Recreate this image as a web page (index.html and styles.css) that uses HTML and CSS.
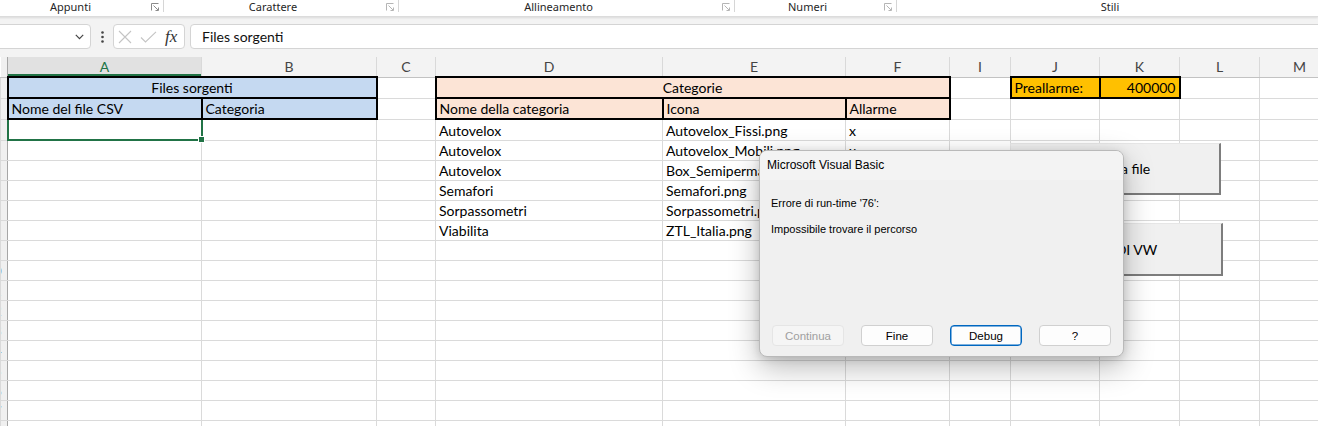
FILE: index.html
```html
<!DOCTYPE html>
<html lang="it">
<head>
<meta charset="utf-8">
<title>Excel - Microsoft Visual Basic</title>
<link rel="stylesheet" href="styles.css">
</head>
<body>
<div class="app">
  <div class="ribbon">
    <div class="grp g1"><span class="lbl">Appunti</span><span class="launch"><svg width="8" height="8" viewBox="0 0 8 8"><path d="M0.5 7.5V0.5H7.5M2.5 2.5L7 7M7.5 4.5V7.5H4.5" fill="none" stroke="#8a8a8a" stroke-width="1"/></svg></span></div><i class="sep"></i>
    <div class="grp g2"><span class="lbl">Carattere</span><span class="launch"><svg width="8" height="8" viewBox="0 0 8 8"><path d="M0.5 7.5V0.5H7.5M2.5 2.5L7 7M7.5 4.5V7.5H4.5" fill="none" stroke="#b5b5b5" stroke-width="1"/></svg></span></div><i class="sep"></i>
    <div class="grp g3"><span class="lbl">Allineamento</span><span class="launch"><svg width="8" height="8" viewBox="0 0 8 8"><path d="M0.5 7.5V0.5H7.5M2.5 2.5L7 7M7.5 4.5V7.5H4.5" fill="none" stroke="#b5b5b5" stroke-width="1"/></svg></span></div><i class="sep"></i>
    <div class="grp g4"><span class="lbl">Numeri</span><span class="launch"><svg width="8" height="8" viewBox="0 0 8 8"><path d="M0.5 7.5V0.5H7.5M2.5 2.5L7 7M7.5 4.5V7.5H4.5" fill="none" stroke="#b5b5b5" stroke-width="1"/></svg></span></div><i class="sep"></i>
    <div class="grp g5"><span class="lbl">Stili</span></div>
  </div>

  <div class="fbar">
    <div class="namebox"><svg class="chev" width="9" height="6" viewBox="0 0 9 6"><path d="M0.8 0.8L4.5 4.6L8.2 0.8" fill="none" stroke="#444" stroke-width="1.2"/></svg></div>
    <div class="dots"><svg width="3" height="12" viewBox="0 0 3 12"><circle cx="1.5" cy="1.5" r="1.3" fill="#444"/><circle cx="1.5" cy="6" r="1.3" fill="#444"/><circle cx="1.5" cy="10.5" r="1.3" fill="#444"/></svg></div>
    <div class="fxbox">
      <svg class="ic-x" width="14" height="14" viewBox="0 0 14 14"><path d="M1 1L13 13M13 1L1 13" stroke="#c4c4c4" stroke-width="1.1" fill="none"/></svg>
      <svg class="ic-ok" width="17" height="12" viewBox="0 0 17 12"><path d="M1 6.5L5.5 11L16 0.8" stroke="#c4c4c4" stroke-width="1.1" fill="none"/></svg>
      <span class="fx">fx</span>
    </div>
    <div class="finput">Files sorgenti</div>
  </div>

  <table class="sheet">
    <colgroup>
      <col class="w-rh"><col class="w-a"><col class="w-b"><col class="w-c"><col class="w-d"><col class="w-e"><col class="w-f"><col class="w-i"><col class="w-j"><col class="w-k"><col class="w-l"><col class="w-m">
    </colgroup>
    <thead>
      <tr class="hr"><th class="rh"></th><th class="sel">A</th><th>B</th><th>C</th><th>D</th><th>E</th><th>F</th><th>I</th><th>J</th><th>K</th><th>L</th><th>M</th></tr>
    </thead>
    <tbody>
      <tr class="r21"><td class="rh"><span>1</span></td><td colspan="2" class="blue tk ctr">Files sorgenti</td><td></td><td colspan="3" class="peach tk ctr">Categorie</td><td></td><td class="orange tk">Preallarme:</td><td class="orange tk rgt">400000</td><td></td><td></td></tr>
      <tr class="r21"><td class="rh"><span>2</span></td><td class="blue tk">Nome del file CSV</td><td class="blue tk">Categoria</td><td></td><td class="peach tk">Nome della categoria</td><td class="peach tk">Icona</td><td class="peach tk">Allarme</td><td></td><td></td><td></td><td></td><td></td></tr>
      <tr class="r21"><td class="rh"><span>3</span></td><td class="cur"><i class="handle"></i></td><td></td><td></td><td>Autovelox</td><td>Autovelox_Fissi.png</td><td>x</td><td></td><td></td><td></td><td></td><td></td></tr>
      <tr class="r20"><td class="rh"><span>4</span></td><td></td><td></td><td></td><td>Autovelox</td><td>Autovelox_Mobili.png</td><td>x</td><td></td><td></td><td></td><td></td><td></td></tr>
      <tr class="r20"><td class="rh"><span>5</span></td><td></td><td></td><td></td><td>Autovelox</td><td>Box_Semipermanenti.png</td><td></td><td></td><td></td><td></td><td></td><td></td></tr>
      <tr class="r20"><td class="rh"><span>6</span></td><td></td><td></td><td></td><td>Semafori</td><td>Semafori.png</td><td></td><td></td><td></td><td></td><td></td><td></td></tr>
      <tr class="r20"><td class="rh"><span>7</span></td><td></td><td></td><td></td><td>Sorpassometri</td><td>Sorpassometri.png</td><td></td><td></td><td></td><td></td><td></td><td></td></tr>
      <tr class="r20"><td class="rh"><span>8</span></td><td></td><td></td><td></td><td>Viabilita</td><td>ZTL_Italia.png</td><td></td><td></td><td></td><td></td><td></td><td></td></tr>
      <tr class="r20"><td class="rh"><span>9</span></td><td></td><td></td><td></td><td></td><td></td><td></td><td></td><td></td><td></td><td></td><td></td></tr>
      <tr class="r20"><td class="rh"><span>10</span></td><td></td><td></td><td></td><td></td><td></td><td></td><td></td><td></td><td></td><td></td><td></td></tr>
      <tr class="r20"><td class="rh"><span>11</span></td><td></td><td></td><td></td><td></td><td></td><td></td><td></td><td></td><td></td><td></td><td></td></tr>
      <tr class="r20"><td class="rh"><span>12</span></td><td></td><td></td><td></td><td></td><td></td><td></td><td></td><td></td><td></td><td></td><td></td></tr>
      <tr class="r20"><td class="rh"><span>13</span></td><td></td><td></td><td></td><td></td><td></td><td></td><td></td><td></td><td></td><td></td><td></td></tr>
      <tr class="r20"><td class="rh"><span>14</span></td><td></td><td></td><td></td><td></td><td></td><td></td><td></td><td></td><td></td><td></td><td></td></tr>
      <tr class="r20"><td class="rh"><span>15</span></td><td></td><td></td><td></td><td></td><td></td><td></td><td></td><td></td><td></td><td></td><td></td></tr>
      <tr class="r20"><td class="rh"><span>16</span></td><td></td><td></td><td></td><td></td><td></td><td></td><td></td><td></td><td></td><td></td><td></td></tr>
      <tr class="r20"><td class="rh"><span>17</span></td><td></td><td></td><td></td><td></td><td></td><td></td><td></td><td></td><td></td><td></td><td></td></tr>
      <tr class="r20"><td class="rh"><span>18</span></td><td></td><td></td><td></td><td></td><td></td><td></td><td></td><td></td><td></td><td></td><td></td></tr>
    </tbody>
  </table>

  <div class="shape s1"><span>Importa file</span></div>
  <div class="shape s2"><span>Crea POI VW</span></div>

  <div class="dlg">
    <div class="dtitle">Microsoft Visual Basic</div>
    <div class="dbody">
      <p class="l1">Errore di run-time '76':</p>
      <p class="l2">Impossibile trovare il percorso</p>
    </div>
    <div class="dbtns">
      <button class="btn" disabled>Continua</button>
      <button class="btn">Fine</button>
      <button class="btn focus">Debug</button>
      <button class="btn">?</button>
    </div>
  </div>
</div>
</body>
</html>
```
FILE: styles.css
```css
html, body {
  margin: 0;
  padding: 0;
  background: #ffffff;
}
body {
  width: 1318px;
  height: 426px;
  overflow: hidden;
}
.app {
  position: relative;
  width: 1318px;
  height: 426px;
  overflow: hidden;
}

/* ribbon group labels */
.ribbon {
  display: flex;
  height: 16px;
  margin-left: -6px;
  background: #ffffff;
  border-bottom: 1px solid #dcdcdc;
  box-shadow: 0 1px 2px rgba(0,0,0,0.10);
  font-family: "Noto Sans", "Open Sans", sans-serif;
  font-size: 11px;
  color: #262626;
  position: relative;
  z-index: 2;
}
.ribbon > * { flex-shrink: 0; }
.grp {
  display: flex;
  align-items: flex-start;
}
.lbl {
  flex: 1;
  text-align: center;
  line-height: 13px;
  white-space: nowrap;
}
.launch {
  width: 16px;
  display: flex;
  justify-content: center;
  padding-top: 3px;
}
.g1 { width: 169px; }
.g2 { width: 234px; }
.g3 { width: 335px; }
.g4 { width: 161px; }
.g5 { width: 426px; }
.sep {
  width: 1px;
  height: 12px;
  background: #d6d6d6;
}

/* formula bar */
.fbar {
  display: flex;
  align-items: center;
  padding: 7px 0 8px;
  background: #f3f3f3;
  font-family: "Lato", "Noto Sans", sans-serif;
}
.fbar > * { flex-shrink: 0; }
.namebox, .fxbox, .finput {
  box-sizing: border-box;
  height: 25px;
  background: #ffffff;
  border: 1px solid #d4d4d4;
  border-radius: 4px;
}
.namebox {
  width: 95px;
  margin-left: -4px;
  display: flex;
  align-items: center;
  justify-content: flex-end;
  padding-right: 6px;
}
.dots {
  width: 22px;
  display: flex;
  justify-content: center;
  padding-left: 1px;
  box-sizing: border-box;
}
.fxbox {
  width: 72px;
  display: flex;
  align-items: center;
  padding-left: 4px;
}
.ic-ok { margin-left: 8px; }
.fx {
  margin-left: 8px;
  font-family: "Liberation Serif", "DejaVu Serif", serif;
  font-style: italic;
  font-size: 17px;
  color: #333333;
  line-height: 20px;
}
.fbar .finput {
  flex: 1 0 auto;
  margin-left: 5px;
  margin-right: -10px;
  padding-left: 11px;
  font-size: 14px;
  line-height: 23px;
  color: #111111;
}

/* sheet */
.sheet {
  table-layout: fixed;
  border-collapse: collapse;
  width: 1339px;
  font-family: "Lato", "Noto Sans", sans-serif;
  font-size: 14px;
  color: #000000;
}
.w-rh { width: 7px; }
.w-a { width: 194px; }
.w-b { width: 175px; }
.w-c { width: 59px; }
.w-d { width: 227px; }
.w-e { width: 183px; }
.w-f { width: 104px; }
.w-i { width: 61px; }
.w-j { width: 89px; }
.w-k { width: 80px; }
.w-l { width: 80px; }
.w-m { width: 80px; }

.hr { height: 20px; }
.r21 { height: 21px; }
.r20 { height: 20px; }

.sheet th {
  background: #f3f3f3;
  border-right: 1px solid #d9d9d9;
  border-bottom: 1px solid #c2c2c2;
  font-weight: normal;
  color: #444444;
  padding: 0;
  line-height: 18px;
  text-align: center;
}
.sheet th.sel {
  background: #e1e1e1;
  color: #217346;
  box-shadow: inset 0 -2px 0 #217346;
}
.sheet td {
  border: 1px solid #dadada;
  padding: 0 3px;
  vertical-align: bottom;
  white-space: nowrap;
  line-height: 18px;
}
.sheet .rh {
  background: #f0f0f0;
  border-right: 1px solid #a6a6a6;
  padding: 0;
  overflow: hidden;
  font-size: 13px;
  color: #555555;
}
.sheet td.rh span {
  display: block;
  width: 32px;
  margin-left: -23px;
  text-align: center;
}
.ctr { text-align: center; }
.rgt { text-align: right; }
.sheet td.tk { border: 2px solid #000000; }
.blue { background: #c5d9f1; }
.peach { background: #fce4d6; }
.orange { background: #ffc000; }
.sheet td.cur {
  border: 2px solid #217346;
  position: relative;
}
.handle {
  position: absolute;
  right: -4px;
  bottom: -4px;
  width: 5px;
  height: 5px;
  background: #217346;
  border: 1px solid #ffffff;
}

/* form buttons on sheet */
.shape {
  position: absolute;
  box-sizing: border-box;
  background: #f0f0f0;
  border-top: 1px solid #e6e6e6;
  border-left: 1px solid #e6e6e6;
  border-right: 2px solid #7d7d7d;
  border-bottom: 2px solid #7d7d7d;
  display: flex;
  align-items: center;
  justify-content: center;
  font-family: "Lato", "Noto Sans", sans-serif;
  font-size: 14px;
  color: #000000;
}
.s1 { left: 1010px; top: 143px; width: 211px; height: 52px; }
.s2 { left: 1010px; top: 223px; width: 213px; height: 53px; }

/* VBA dialog */
.dlg {
  position: absolute;
  left: 759px;
  top: 150px;
  width: 365px;
  height: 207px;
  box-sizing: border-box;
  background: #f0f0f0;
  border: 1px solid #b9b9b9;
  border-radius: 8px;
  box-shadow: 0 10px 30px rgba(0,0,0,0.28), 0 2px 8px rgba(0,0,0,0.12);
  display: flex;
  flex-direction: column;
  font-family: "Liberation Sans", "Noto Sans", sans-serif;
  font-size: 11px;
  color: #000000;
  overflow: hidden;
}
.dtitle {
  height: 29px;
  line-height: 29px;
  padding-left: 7px;
  background: #f3f3f3;
  font-size: 12px;
}
.dbody {
  padding: 15px 0 0 11px;
}
.dbody p {
  margin: 0;
  line-height: 16px;
}
.dbody .l2 { margin-top: 10px; }
.dbtns {
  margin-top: auto;
  display: flex;
  gap: 17px;
  padding: 0 0 10px 12px;
}
.btn {
  box-sizing: border-box;
  width: 72px;
  height: 21px;
  padding: 0;
  background: #fdfdfd;
  border: 1px solid #d0d0d0;
  border-radius: 4px;
  font-family: "Liberation Sans", "Noto Sans", sans-serif;
  font-size: 11.5px;
  color: #000000;
}
.btn:disabled {
  background: #f5f5f5;
  border-color: #e5e5e5;
  color: #a0a0a0;
}
.btn.focus {
  border: 1px solid #0067c0;
  box-shadow: inset 0 0 0 0.5px #0067c0;
}
```
